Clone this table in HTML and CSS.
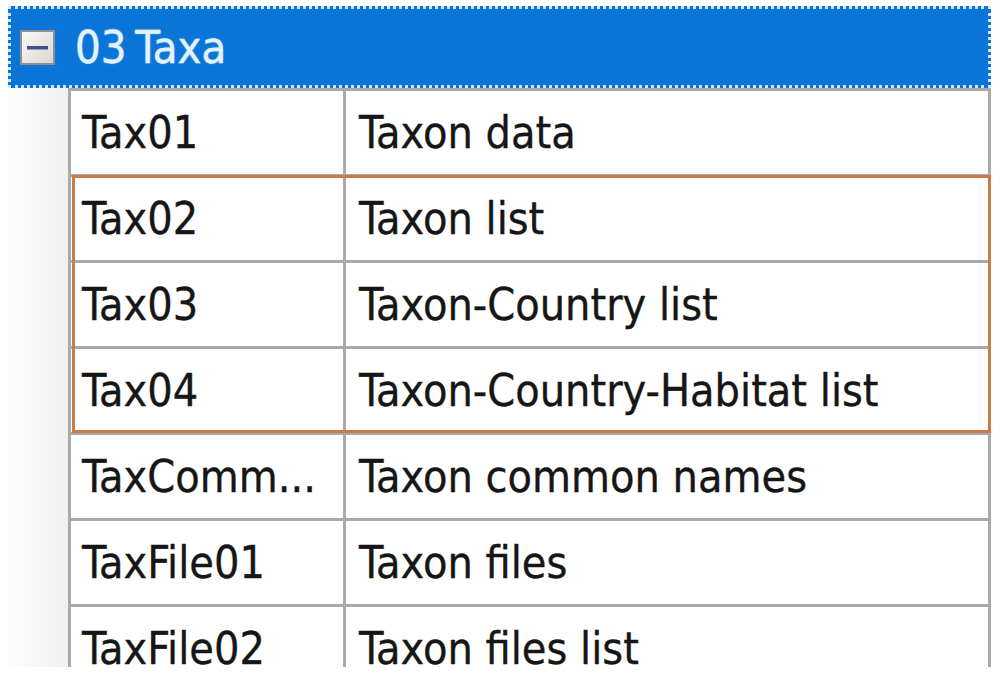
FILE: index.html
```html
<!DOCTYPE html>
<html>
<head>
<meta charset="utf-8">
<link rel="stylesheet" href="styles.css">
</head>
<body>
<div class="page">
  <div class="group-header">
    <svg class="toggle" width="35" height="35" viewBox="0 0 35 35">
      <defs>
        <linearGradient id="tg" x1="0" y1="0" x2="1" y2="1">
          <stop offset="0" stop-color="#fbfaf7"/>
          <stop offset="1" stop-color="#d9d6cf"/>
        </linearGradient>
      </defs>
      <rect x="1" y="1" width="33" height="33" fill="url(#tg)" stroke="#8f8f8f" stroke-width="2"/>
      <rect x="7" y="16" width="21" height="3.5" fill="#3f4f8a"/>
    </svg>
    <span class="group-title">03 Taxa</span>
  </div>
  <div class="grid-area">
    <div class="gutter"></div>
    <div class="table">
      <div class="row"><div class="cell code">Tax01</div><div class="cell desc">Taxon data</div></div>
      <div class="highlight">
        <div class="row"><div class="cell code">Tax02</div><div class="cell desc">Taxon list</div></div>
        <div class="row"><div class="cell code">Tax03</div><div class="cell desc">Taxon-Country list</div></div>
        <div class="row"><div class="cell code">Tax04</div><div class="cell desc">Taxon-Country-Habitat list</div></div>
      </div>
      <div class="row"><div class="cell code">TaxComm...</div><div class="cell desc">Taxon common names</div></div>
      <div class="row"><div class="cell code">TaxFile01</div><div class="cell desc">Taxon files</div></div>
      <div class="row"><div class="cell code">TaxFile02</div><div class="cell desc">Taxon files list</div></div>
    </div>
  </div>
</div>
</body>
</html>
```

FILE: styles.css
```css
html, body {
  margin: 0;
  padding: 0;
  background: #ffffff;
}
body {
  width: 1000px;
  height: 686px;
  overflow: hidden;
  font-family: "DejaVu Sans Condensed", "DejaVu Sans", sans-serif;
  font-stretch: condensed;
}
.page {
  padding: 6px 0 0 8px;
  width: 983px;
}
.group-header {
  box-sizing: border-box;
  height: 82px;
  width: 983px;
  background: #0a75d6;
  border: 3px dotted #cfe6fb;
  display: flex;
  align-items: center;
  padding-left: 9px;
  padding-top: 1px;
  gap: 20px;
}
.toggle {
  display: block;
  flex: none;
}
.group-title {
  color: #e4f2ff;
  font-size: 45px;
  line-height: 1;
  word-spacing: -4px;
  -webkit-text-stroke: 0.3px #e4f2ff;
  text-shadow: 0 0 2px rgba(170, 215, 255, 0.6);
}
.grid-area {
  display: flex;
  height: 579px;
  overflow: hidden;
}
.gutter {
  width: 60px;
  flex: none;
  background: linear-gradient(to right, #fdfdfd, #f0f0f0);
}
.table {
  width: 923px;
  box-sizing: border-box;
  border-top: 3px solid #a9a9a9;
  border-left: 3px solid #a9a9a9;
  border-right: 3px solid #a9a9a9;
  background: #ffffff;
}
.row {
  display: flex;
  height: 86px;
  box-sizing: border-box;
  border-bottom: 3px solid #a9a9a9;
}
.cell {
  display: flex;
  align-items: center;
  font-size: 44.5px;
  line-height: 1;
  color: #161616;
  -webkit-text-stroke: 0.35px #161616;
  padding-top: 2px;
  white-space: nowrap;
  overflow: hidden;
}
.code {
  flex: none;
  padding-left: 11px;
  box-sizing: border-box;
  border-right: 3px solid #a9a9a9;
  width: 275px;
}
.desc {
  flex: 1;
  padding-left: 13px;
}
.highlight {
  position: relative;
}
.highlight::after {
  content: "";
  position: absolute;
  top: -2px;
  left: 1px;
  right: -3px;
  bottom: 2px;
  border: 3px solid #c97b48;
  pointer-events: none;
}
```
